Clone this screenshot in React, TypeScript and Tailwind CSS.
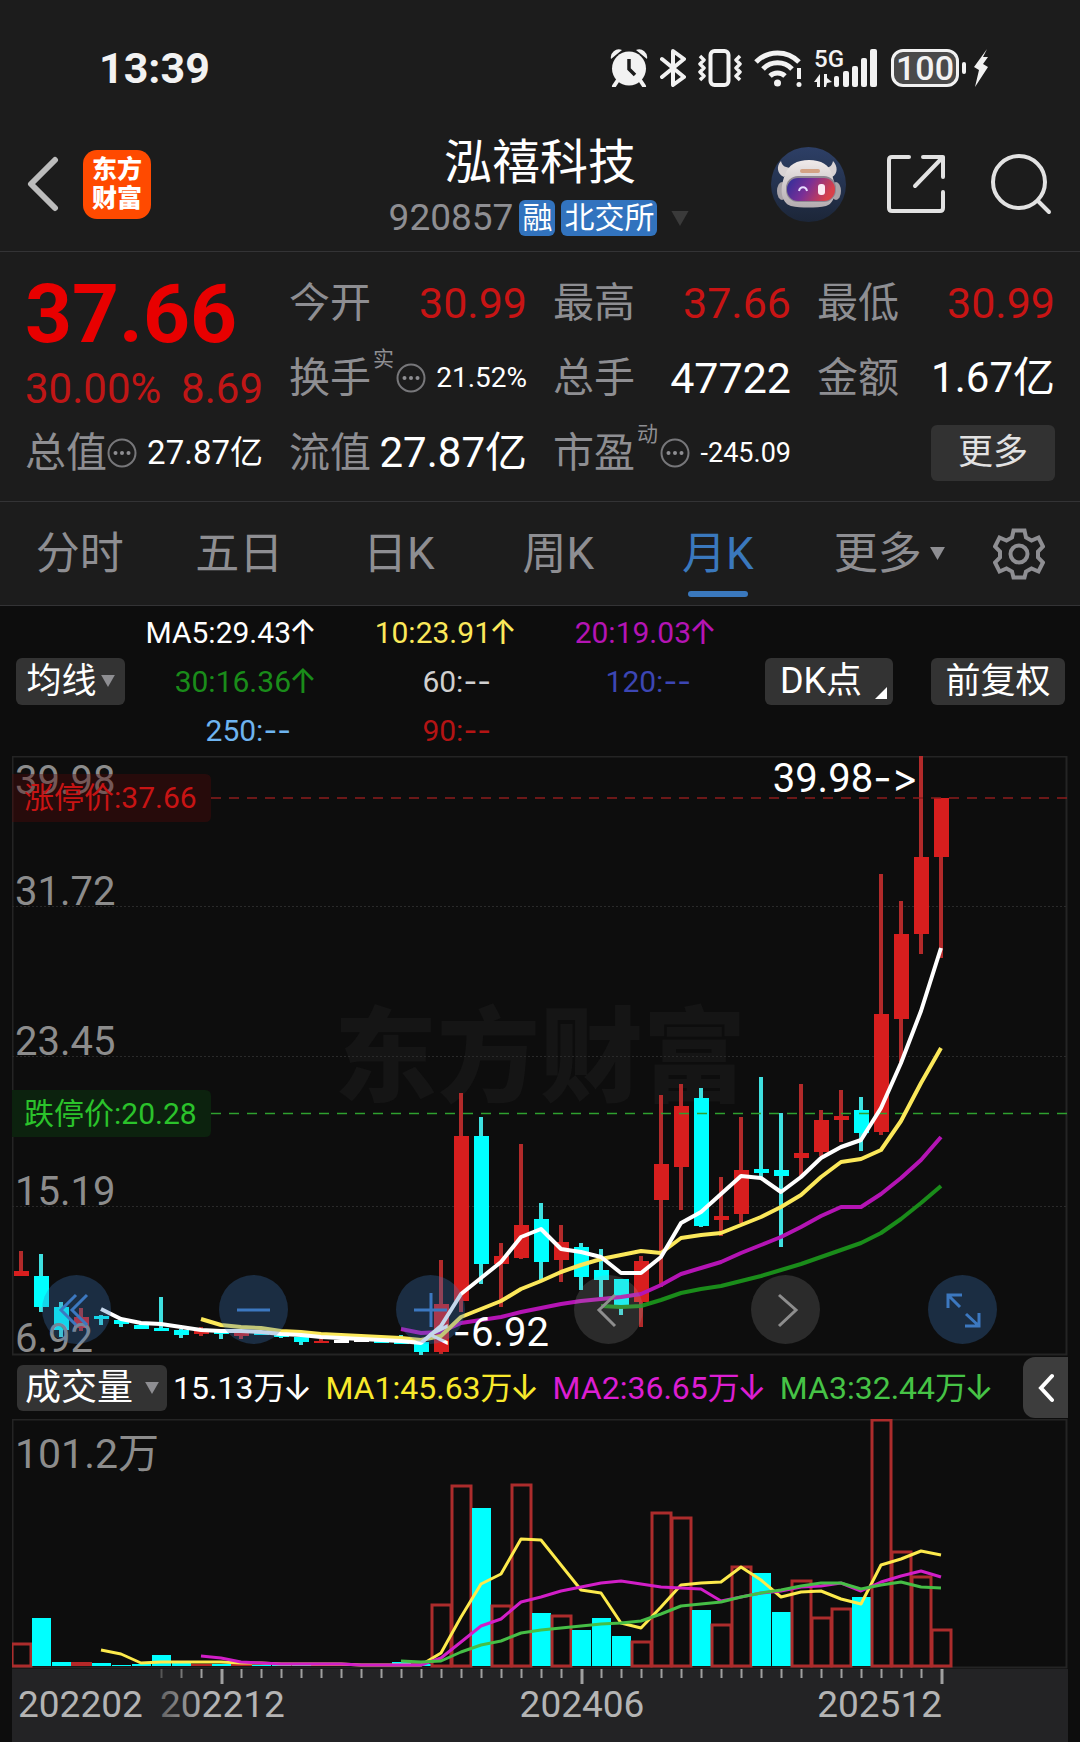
import React from "react";

const UP = "#d81e1e";
const DOWN = "#00ffff";

type Kind = "r" | "c" | "w";

/* kind, wick top, wick bottom, body top, body bottom */
const candles: [Kind, number, number, number, number][] = [
  ["r", 1251, 1276, 1271, 1276],
  ["c", 1254, 1312, 1276, 1307],
  ["c", 1302, 1337, 1307, 1330],
  ["r", 1308, 1331, 1317, 1328],
  ["c", 1315, 1325, 1316, 1319],
  ["c", 1319, 1327, 1320, 1324],
  ["c", 1324, 1329, 1325, 1329],
  ["c", 1297, 1331, 1328, 1331],
  ["c", 1329, 1338, 1330, 1335],
  ["r", 1327, 1336, 1331, 1334],
  ["c", 1332, 1339, 1332, 1334],
  ["r", 1333, 1339, 1333, 1336],
  ["c", 1332, 1335, 1332, 1335],
  ["c", 1334, 1338, 1334, 1337],
  ["c", 1337, 1345, 1337, 1342],
  ["r", 1339, 1343, 1341, 1343],
  ["w", 1340, 1343, 1340, 1343],
  ["w", 1340, 1342, 1340, 1342],
  ["c", 1341, 1343, 1341, 1343],
  ["c", 1335, 1344, 1341, 1344],
  ["c", 1342, 1355, 1342, 1352],
  ["r", 1260, 1354, 1304, 1352],
  ["r", 1093, 1312, 1136, 1301],
  ["c", 1117, 1284, 1136, 1264],
  ["r", 1243, 1307, 1256, 1264],
  ["r", 1144, 1259, 1225, 1258],
  ["c", 1203, 1280, 1219, 1262],
  ["r", 1225, 1282, 1242, 1260],
  ["c", 1243, 1290, 1247, 1277],
  ["c", 1249, 1297, 1270, 1280],
  ["c", 1279, 1315, 1279, 1305],
  ["r", 1256, 1327, 1261, 1302],
  ["r", 1095, 1287, 1164, 1200],
  ["r", 1084, 1210, 1106, 1167],
  ["c", 1088, 1227, 1098, 1226],
  ["r", 1177, 1236, 1216, 1220],
  ["r", 1117, 1223, 1170, 1214],
  ["c", 1077, 1179, 1169, 1173],
  ["c", 1113, 1247, 1170, 1176],
  ["r", 1084, 1177, 1153, 1158],
  ["r", 1110, 1156, 1120, 1152],
  ["r", 1090, 1142, 1116, 1120],
  ["c", 1097, 1151, 1110, 1133],
  ["r", 874, 1135, 1014, 1132],
  ["r", 901, 1064, 934, 1019],
  ["r", 756, 954, 857, 934],
  ["r", 798, 958, 798, 857],
];

const volumes: [Kind, number][] = [
  ["r", 1643], ["c", 1618], ["c", 1662], ["r", 1662], ["c", 1663], ["c", 1665], ["c", 1664],
  ["c", 1655], ["c", 1663], ["r", 1664], ["c", 1664], ["r", 1664], ["c", 1665], ["c", 1665],
  ["c", 1665], ["r", 1665], ["r", 1665], ["r", 1665], ["c", 1665], ["c", 1662], ["c", 1664],
  ["r", 1604], ["r", 1485], ["c", 1508], ["r", 1605], ["r", 1484], ["c", 1613], ["r", 1615],
  ["c", 1630], ["c", 1618], ["c", 1636], ["r", 1641], ["r", 1512], ["r", 1517], ["c", 1610],
  ["r", 1624], ["r", 1566], ["c", 1573], ["c", 1612], ["r", 1580], ["r", 1617], ["r", 1608],
  ["c", 1597], ["r", 1419], ["r", 1551], ["r", 1576], ["r", 1629],
];

const ma5 = [1309, 1319, 1323, 1324, 1327, 1330, 1331, 1331, 1332, 1334, 1335, 1337, 1338, 1339, 1340, 1341, 1343, 1326, 1294, 1278, 1262, 1237, 1229, 1249, 1252, 1257, 1273, 1273, 1257, 1223, 1212, 1194, 1176, 1178, 1192, 1177, 1158, 1147, 1140, 1108, 1063, 1011, 948];
const ma10 = [1319, 1325, 1327, 1328, 1331, 1332, 1334, 1335, 1336, 1337, 1338, 1340, 1336, 1317, 1309, 1301, 1289, 1281, 1272, 1265, 1259, 1255, 1251, 1253, 1238, 1235, 1233, 1225, 1217, 1207, 1195, 1177, 1162, 1159, 1150, 1121, 1083, 1048];
const ma20 = [1329, 1333, 1332, 1323, 1320, 1317, 1312, 1308, 1304, 1301, 1299, 1297, 1294, 1285, 1274, 1268, 1262, 1253, 1245, 1237, 1227, 1216, 1207, 1207, 1194, 1178, 1160, 1137];
const ma30 = [1306, 1307, 1306, 1300, 1293, 1289, 1286, 1281, 1276, 1270, 1264, 1257, 1250, 1243, 1233, 1219, 1203, 1186];

const vma1 = [1650, 1654, 1663, 1662, 1662, 1662, 1662, 1663, 1663, 1664, 1664, 1664, 1664, 1665, 1665, 1665, 1665, 1653, 1617, 1584, 1574, 1539, 1540, 1565, 1590, 1593, 1623, 1628, 1607, 1585, 1583, 1582, 1567, 1580, 1597, 1592, 1591, 1599, 1604, 1565, 1559, 1551, 1555];
const vma2 = [1656, 1658, 1662, 1663, 1664, 1664, 1664, 1664, 1665, 1665, 1665, 1665, 1658, 1642, 1626, 1619, 1602, 1597, 1591, 1587, 1583, 1581, 1584, 1587, 1588, 1589, 1601, 1597, 1593, 1591, 1587, 1586, 1583, 1591, 1582, 1576, 1571, 1577];
const vma3 = [1661, 1662, 1661, 1652, 1645, 1641, 1633, 1630, 1628, 1626, 1624, 1623, 1621, 1614, 1606, 1604, 1602, 1597, 1593, 1590, 1586, 1583, 1583, 1589, 1585, 1582, 1587, 1588];

const cx = (i: number) => 21 + 20 * i;
/* series end on the newest month, so the start index follows from the length */
const line = (ys: number[]) => ys.map((y, k) => `${cx(47 - ys.length + k)},${y}`).join(" ");

function Line({ ys, color, w }: { ys: number[]; color: string; w: number }) {
  return <polyline points={line(ys)} fill="none" stroke={color} strokeWidth={w} strokeLinejoin="round" />;
}

function Caret({ className }: { className: string }) {
  return (
    <svg viewBox="0 0 16 14" className={className} aria-hidden="true">
      <path d="M0 0h16L8 14z" fill="currentColor" />
    </svg>
  );
}

function StatusBar() {
  return (
    <div className="flex h-[136px] items-center justify-between pr-[91px] pl-[99px] text-[#f2f2f2]">
      <span className="text-[43px] leading-none font-bold">13:39</span>
      <div className="flex items-center gap-3">
        <svg viewBox="0 0 38 38" className="h-[38px] w-[38px]" fill="currentColor" aria-label="闹钟">
          <path d="M1 10a8 8 0 0 1 11-9zM37 10A8 8 0 0 0 26 1z" />
          <circle cx="19" cy="19.500" r="17" />
          <path d="M8 31l-4 6M30 31l4 6" stroke="currentColor" strokeWidth="4" strokeLinecap="round" />
          <path d="M19 10v10l6 6" fill="none" stroke="#1c1c1c" strokeWidth="3.500" />
        </svg>
        <svg viewBox="0 0 26 38" className="h-[38px] w-[26px]" fill="none" stroke="currentColor" strokeWidth="4" strokeLinejoin="round" strokeLinecap="round" aria-label="蓝牙">
          <path d="M2 10l22 18-11 8V2l11 8L2 28" />
        </svg>
        <svg viewBox="0 0 44 38" className="h-[38px] w-[44px]" fill="none" stroke="currentColor" aria-label="振动">
          <rect x="12.500" y="2" width="18" height="34" rx="4" strokeWidth="4" />
          <path d="M2 7l4 4-4 4 4 4-4 4 4 4-4 4M42 7l-4 4 4 4-4 4 4 4-4 4 4 4" strokeWidth="3.500" strokeLinejoin="round" />
        </svg>
        <svg viewBox="0 0 48 38" className="h-[38px] w-[48px]" fill="none" stroke="currentColor" strokeWidth="5" aria-label="无线网络">
          <path d="M2 13a30 30 0 0 1 43 0M9 20a20 20 0 0 1 29 0M16 27a11 11 0 0 1 15 0" />
          <circle cx="23.500" cy="34" r="3.500" fill="currentColor" stroke="none" />
          <path d="M45 19v11" strokeWidth="4" />
          <circle cx="45" cy="35.500" r="2.500" fill="currentColor" stroke="none" />
        </svg>
        <div className="relative mr-0.5 h-[38px] w-[63px]">
          <span className="absolute top-0 left-0 text-[24px] leading-[20px] font-medium">5G</span>
          <svg viewBox="0 0 63 38" className="h-[38px] w-[63px]" fill="currentColor" aria-label="信号">
            <path d="M0 33l6-8v13H3v-5zM10 25h3v4l5 4-5 1-1 4h-2z" />
            <rect x="20" y="27" width="5" height="11" rx="2" />
            <rect x="29" y="22" width="6" height="16" rx="2" />
            <rect x="38" y="17" width="6" height="21" rx="2" />
            <rect x="47" y="9" width="6" height="29" rx="2" />
            <rect x="56" y="0" width="7" height="38" rx="2" />
          </svg>
        </div>
        <div className="flex items-center gap-[3px]">
          <span className="flex h-[38px] w-[68px] items-center justify-center rounded-xl border-[3px] border-[#f2f2f2] bg-[#4a4a4a] text-[34px] leading-none font-medium">100</span>
          <span className="h-3 w-1 rounded bg-[#f2f2f2]" />
          <svg viewBox="0 0 16 38" className="ml-1 h-[38px] w-4" fill="currentColor" aria-label="充电">
            <path d="M14 0L1 18l5 3-4 17L15 18l-5-3 5-7h-5z" />
          </svg>
        </div>
      </div>
    </div>
  );
}

function Robot() {
  return (
    <svg viewBox="0 0 75 75" className="h-[75px] w-[75px]">
      <defs>
        <linearGradient id="visor" x1="0" x2="1" y1="0" y2="0.300">
          <stop offset="0" stopColor="#2c2f9a" />
          <stop offset="0.500" stopColor="#7a2f96" />
          <stop offset="1" stopColor="#d8404a" />
        </linearGradient>
        <linearGradient id="disc" x1="0" x2="0" y1="0" y2="1">
          <stop offset="0" stopColor="#2d3f66" />
          <stop offset="1" stopColor="#1c2638" />
        </linearGradient>
        <linearGradient id="shell" x1="0" x2="0" y1="0" y2="1">
          <stop offset="0" stopColor="#f0eaea" />
          <stop offset="1" stopColor="#b3acb0" />
        </linearGradient>
      </defs>
      <circle cx="37.500" cy="37.500" r="37.500" fill="url(#disc)" />
      <path d="M10 14c-5 5-4 13 3 16l8-9c-6 0-10-2-11-7zM62 14c5 5 5 13-1 16l-8-9c5 0 8-2 9-7z" fill="#d8d2d4" />
      <ellipse cx="11" cy="44" rx="5" ry="9" fill="#a9a3a8" />
      <ellipse cx="65" cy="44" rx="5" ry="9" fill="#a9a3a8" />
      <path d="M14 28c3-10 12-15 24-15s21 5 23 15c5 14 4 28-6 31-10 2-25 2-35 0-10-3-12-17-6-31z" fill="url(#shell)" />
      <rect x="29" y="22" width="20" height="4" rx="2" fill="#d3a284" />
      <rect x="15" y="29" width="50" height="26" rx="12" fill="#8d8692" />
      <rect x="16" y="31" width="48" height="23" rx="11" fill="url(#visor)" />
      <path d="M28 44c1-5 7-5 8 0" fill="none" stroke="#e8dcff" strokeWidth="2" />
      <rect x="47" y="37" width="7" height="11" rx="3" fill="#fbe9f3" />
    </svg>
  );
}

function Header() {
  return (
    <header className="grid h-[116px] grid-cols-[1fr_auto_1fr] items-center border-b border-[#333335] pb-[13px]">
      <div className="flex items-center pb-1.5 pl-[27px]">
        <button aria-label="返回">
          <svg viewBox="0 0 32 56" className="h-14 w-8" fill="none" stroke="#bcbcbc" strokeWidth="6" strokeLinecap="round" strokeLinejoin="round">
            <path d="M28 4L4 28l24 24" />
          </svg>
        </button>
        <div className="ml-6 flex h-[69px] w-[68px] flex-col items-center justify-center rounded-[14px] bg-[#ff4a00] text-[25px] leading-[29px] font-black text-white">
          <span>东方</span>
          <span>财富</span>
        </div>
      </div>
      <div className="flex flex-col items-center gap-3">
        <h1 className="text-[48px] leading-[50px] text-white">泓禧科技</h1>
        <div className="flex h-9 items-center text-[#8e8e92]">
          <span className="text-[37px] leading-9">920857</span>
          <span className="ml-1.5 flex h-9 w-9 items-center justify-center rounded-md bg-[#3273be] text-[30px] leading-9 text-white">融</span>
          <span className="ml-1.5 flex h-9 w-24 items-center justify-center rounded-md bg-[#3273be] text-[30px] leading-9 text-white">北交所</span>
          <Caret className="ml-3 h-[15px] w-[22px] text-[#3a3a3a]" />
        </div>
      </div>
      <div className="flex items-center justify-end pr-7 pb-1.5">
        <button aria-label="智能助手"><Robot /></button>
        <button aria-label="分享" className="ml-10">
          <svg viewBox="0 0 60 60" className="h-[60px] w-[60px]" fill="none" stroke="#e2e2e2" strokeWidth="4" strokeLinecap="round" strokeLinejoin="round">
            <path d="M23 3H6q-3 0-3 3v48q0 3 3 3h48q3 0 3-3V38M37 3h20v20M57 3L29 32" />
          </svg>
        </button>
        <button aria-label="搜索" className="ml-11">
          <svg viewBox="0 0 62 62" className="h-[62px] w-[62px]" fill="none" stroke="#e2e2e2" strokeWidth="4" strokeLinecap="round">
            <circle cx="29" cy="29" r="26" />
            <path d="M48 48l11 11" />
          </svg>
        </button>
      </div>
    </header>
  );
}

function Dots() {
  return (
    <svg viewBox="0 0 30 30" className="h-[30px] w-[30px]" aria-hidden="true">
      <circle cx="15" cy="15" r="13.500" fill="none" stroke="#77777a" strokeWidth="2" />
      <circle cx="8.500" cy="15" r="2" fill="#8e8e92" />
      <circle cx="15" cy="15" r="2" fill="#8e8e92" />
      <circle cx="21.500" cy="15" r="2" fill="#8e8e92" />
    </svg>
  );
}

function Cell({ label, mark, dots, value, size, red }: { label: string; mark?: string; dots?: boolean; value: string; size: string; red?: boolean }) {
  return (
    <div className="flex h-[75px] items-center justify-between whitespace-nowrap">
      <dt className="flex items-center text-[41px] leading-[50px] text-[#8e8e92]">
        {label}
        {mark && <span className="mb-[38px] ml-0.5 w-[23px] text-[21px] leading-6">{mark}</span>}
        {dots && <Dots />}
      </dt>
      <dd className={`${size} leading-[50px] ${red ? "text-[#c81414]" : "text-white"}`}>{value}</dd>
    </div>
  );
}

function Quote() {
  return (
    <dl className="grid grid-cols-4 gap-x-[26px] border-b border-[#333335] px-[25px] pt-[13px] pb-[11px]">
      <div className="row-span-2 whitespace-nowrap">
        <dt className="text-[82px] leading-[98px] font-bold text-[#e80000]">37.66</dt>
        <dd className="flex justify-between text-[42px] leading-[52px] text-[#c01616]">
          <span>30.00%</span>
          <span>8.69</span>
        </dd>
      </div>
      <Cell label="今开" value="30.99" size="text-[43px]" red />
      <Cell label="最高" value="37.66" size="text-[43px]" red />
      <Cell label="最低" value="30.99" size="text-[43px]" red />
      <Cell label="换手" mark="实" dots value="21.52%" size="text-[28px]" />
      <Cell label="总手" value="47722" size="text-[43px]" />
      <Cell label="金额" value="1.67亿" size="text-[42px]" />
      <Cell label="总值" dots value="27.87亿" size="text-[33px]" />
      <Cell label="流值" value="27.87亿" size="text-[42px]" />
      <Cell label="市盈" mark="动" dots value="-245.09" size="text-[27px]" />
      <div className="flex h-[75px] items-center justify-end">
        <button className="h-14 w-[124px] rounded-md bg-[#323232] text-[35px] leading-[50px] text-[#e2e2e2]">更多</button>
      </div>
    </dl>
  );
}

function Tabs() {
  const tabs = ["分时", "五日", "日K", "周K", "月K"];
  return (
    <nav className="flex h-[104px] border-b border-[#333335] text-[44px] leading-[60px] text-[#8e8e92]">
      <div className="grid flex-1 grid-cols-6">
        {tabs.map((t) => (
          <button key={t} className={t === "月K" ? "relative text-[#3a78bd]" : ""}>
            {t}
            {t === "月K" && <span className="absolute bottom-2 left-1/2 h-1.5 w-[60px] -translate-x-1/2 rounded-full bg-[#3a78bd]" />}
          </button>
        ))}
        <button className="flex items-center justify-center gap-2 pl-6">
          更多
          <Caret className="h-[13px] w-[15px]" />
        </button>
      </div>
      <button aria-label="设置" className="flex w-[123px] items-center justify-center">
        <svg viewBox="0 0 52 52" className="h-[52px] w-[52px]" fill="none" stroke="currentColor" strokeWidth="4">
          <path d="M20.500 2.500h11l1.500 7 5.500 3 7-3 4.500 9-5 5v6l5 5-4.500 9-7-3-5.500 3-1.500 6h-11l-1.500-6-5.500-3-7 3-4.500-9 5-5v-6l-5-5 4.500-9 7 3 5.500-3z" />
          <circle cx="26" cy="26" r="8.500" />
        </svg>
      </button>
    </nav>
  );
}

function Averages() {
  const items: [string, string, string][] = [
    ["MA5:", "29.43", "text-white"],
    ["10:", "23.91", "text-[#fbe85a]"],
    ["20:", "19.03", "text-[#b414b4]"],
    ["30:", "16.36", "text-[#1a8c1a]"],
    ["60:", "--", "text-[#d0d0d0]"],
    ["120:", "--", "text-[#3c46b4]"],
    ["250:", "--", "text-[#6eb4f0]"],
    ["90:", "--", "text-[#b41414]"],
  ];
  return (
    <section className="flex h-[150px] items-center pr-[15px] pl-4">
      <button className="flex h-[47px] w-[109px] items-center justify-center gap-1 rounded-md bg-[#333333] text-[35px] leading-[47px] text-white">
        均线
        <Caret className="h-3 w-3.5 text-[#8e8e92]" />
      </button>
      <ul className="grid flex-1 grid-cols-[24fr_25fr_25fr] text-[30px] leading-[49px]">
        {items.map(([name, value, color]) => (
          <li key={name} className={`flex justify-end ${color}`}>
            <span>{name}</span>
            <span className={value === "--" ? "font-[Inter] [font-variant-ligatures:none]" : ""}>{value}</span>
            <span className="flex w-[26px] justify-end text-[34px]">{value === "--" ? "" : "↑"}</span>
          </li>
        ))}
      </ul>
      <button className="relative ml-12 h-[47px] w-[128px] rounded-md bg-[#333333] pr-4 text-[36px] leading-[47px] text-white">
        DK点
        <svg viewBox="0 0 12 12" className="absolute right-1.5 bottom-1.5 h-3 w-3" aria-hidden="true">
          <path d="M12 0v12H0z" fill="white" />
        </svg>
      </button>
      <button className="ml-[38px] h-[47px] w-[134px] rounded-md bg-[#333333] text-[35px] leading-[47px] text-white">前复权</button>
    </section>
  );
}

const controls: [string, boolean, string][] = [
  ["最早", true, "M34 20L19 35l15 15M45 20L30 35l15 15"],
  ["缩小", true, "M18 35h33"],
  ["放大", true, "M18 35h33M35 18v34"],
  ["前一月", false, "M41 20L25 35l16 16"],
  ["后一月", false, "M28 20l17 15-17 16"],
  ["全屏", true, "M20 33V20h14M20 20l12 12M51 38v13H37M51 51L38 39"],
];

function PriceChart() {
  const grays: [string, number][] = [["39.98", 794], ["31.72", 905], ["23.45", 1055], ["15.19", 1205], ["6.92", 1352]];
  return (
    <section className="relative mx-3">
      <svg viewBox="12 756 1056 600" className="block h-auto w-full" role="img" aria-label="月K线">
        <rect x="12.500" y="756.500" width="1054" height="598" fill="none" stroke="#242424" strokeWidth="2" />
        <text x="540" y="1094" textAnchor="middle" fontSize="103" fontWeight="900" fill="#151515">东方财富</text>
        {[906, 1056, 1206].map((y) => (
          <path key={y} d={`M12 ${y}.5H1067`} stroke="#2a2a2a" strokeWidth="1" strokeDasharray="2 2" />
        ))}
        {candles.map(([k, wt, wb, bt, bb], i) => (
          <g key={i}>
            <rect x={cx(i) - 2} y={wt} width="4" height={wb - wt} fill={k === "r" ? "#b22a2a" : k === "w" ? "#fff" : "#3fe0e0"} />
            <rect x={cx(i) - 7} y={bt} width="15" height={bb - bt} fill={k === "r" ? UP : k === "w" ? "#fff" : DOWN} />
          </g>
        ))}
        <path d="M211 798H1067" stroke="#8c1c1c" strokeWidth="1.500" strokeDasharray="10 8" />
        <path d="M211 1113.500H1067" stroke="#2fa02f" strokeWidth="1.500" strokeDasharray="10 8" />
        <Line ys={ma30} color="#1a8c1a" w={4} />
        <Line ys={ma20} color="#b414b4" w={4} />
        <Line ys={ma10} color="#fbe85a" w={4} />
        <Line ys={ma5} color="#ffffff" w={4} />
        <g fontSize="40" fill="#8c8c8c">
          {grays.map(([t, y]) => (
            <text key={t} x="15" y={y}>{t}</text>
          ))}
        </g>
        <path d="M12 774h193q6 0 6 6v36q0 6-6 6H12z" fill="#500a0a" fillOpacity="0.400" />
        <path d="M12 1090h193q6 0 6 6v35q0 6-6 6H12z" fill="#0c220e" />
        <text x="24" y="808" fontSize="30" fill="#c81414">涨停价:37.66</text>
        <text x="24" y="1124" fontSize="30" fill="#2bc32b">跌停价:20.28</text>
        <text x="918" y="792" fontSize="40" textAnchor="end" fill="#fff">39.98<tspan className="font-[Inter] [font-variant-ligatures:none]" fontSize="40">-&gt;</tspan></text>
        <text x="426" y="1346" fontSize="40" fill="#fff"><tspan className="font-[Inter] [font-variant-ligatures:none]" fontSize="40">&lt;-</tspan>6.92</text>
      </svg>
      <div className="absolute right-[71px] bottom-3 left-[30px] flex justify-between">
        {controls.map(([name, active, d]) => (
          <button key={name} aria-label={name} className={active ? "rounded-full bg-[#3a78bd]/30" : "rounded-full bg-[#a3a3a3]/20"}>
            <svg viewBox="0 0 69 69" className="h-[69px] w-[69px]" fill="none" stroke={active ? "#3c78c0" : "#8e8e8e"} strokeWidth="3">
              <path d={d} />
            </svg>
          </button>
        ))}
      </div>
    </section>
  );
}

function VolumeBar() {
  const items: [string, string][] = [
    ["15.13万", "text-white"],
    ["MA1:45.63万", "text-[#f8e92c]"],
    ["MA2:36.65万", "text-[#dc1ed2]"],
    ["MA3:32.44万", "text-[#46c346]"],
  ];
  return (
    <section className="flex h-[63px] items-center justify-between pr-3 pl-[17px]">
      <button className="flex h-[46px] w-[150px] items-center justify-center gap-3 rounded-md bg-[#333333] text-[36px] leading-[46px] text-white">
        成交量
        <Caret className="h-3 w-3.5 text-[#8e8e92]" />
      </button>
      <ul className="ml-1.5 flex flex-1 gap-4 text-[32px] leading-[60px] whitespace-nowrap">
        {items.map(([text, color]) => (
          <li key={text} className={`flex ${color}`}>
            {text}
            <span className="flex w-6 justify-center text-[36px]">↓</span>
          </li>
        ))}
      </ul>
      <button aria-label="展开" className="flex h-[61px] w-[45px] items-center justify-center rounded-l-xl bg-[#3d3d3d]">
        <svg viewBox="0 0 16 30" className="h-[30px] w-4" fill="none" stroke="white" strokeWidth="4" strokeLinecap="round">
          <path d="M14 3L3 15l11 12" />
        </svg>
      </button>
    </section>
  );
}

function VolumeChart() {
  return (
    <section className="mx-3">
      <svg viewBox="12 1419 1056 250" className="block h-auto w-full" role="img" aria-label="成交量">
        <rect x="12.500" y="1419.500" width="1054" height="248" fill="none" stroke="#242424" strokeWidth="2" />
        <text x="15" y="1468" fontSize="41" fill="#8c8c8c">101.2万</text>
        {volumes.map(([k, y], i) =>
          k === "c" ? (
            <rect key={i} x={cx(i) - 9} y={y} width="19" height={1666 - y} fill={DOWN} />
          ) : y > 1660 ? (
            <rect key={i} x={cx(i) - 10} y={y} width="21" height={1666 - y} fill="#b42828" />
          ) : (
            <rect key={i} x={cx(i) - 9} y={y + 1} width="19" height={1665 - y} fill="none" stroke="#ac2c2c" strokeWidth="3" />
          ),
        )}
        <Line ys={vma1} color="#fdea4c" w={3} />
        <Line ys={vma2} color="#d21ec8" w={3} />
        <Line ys={vma3} color="#46be46" w={3} />
      </svg>
      <svg viewBox="12 1669 1056 73" className="block h-auto w-full bg-[#232325]" role="img" aria-label="时间轴">
        <defs>
          <linearGradient id="fade" gradientUnits="userSpaceOnUse" x1="150" x2="205" y1="0" y2="0">
            <stop offset="0" stopColor="#505052" />
            <stop offset="1" stopColor="#b4b4b4" />
          </linearGradient>
        </defs>
        {candles.map((_, i) =>
          i < 7 ? null : (
            <rect
              key={i}
              x={cx(i) - 0.5}
              y="1669"
              width={i === 10 || i === 28 || i === 46 ? 3 : 2}
              height={i === 10 || i === 28 || i === 46 ? 15 : 9}
              fill={i === 7 ? "#555" : i === 8 ? "#777" : "#a0a0a0"}
            />
          ),
        )}
        <g fontSize="37" fill="#b4b4b4">
          <text x="18" y="1717">202202</text>
          <text x="160" y="1717" fill="url(#fade)">202212</text>
          <text x="582" y="1717" textAnchor="middle">202406</text>
          <text x="942" y="1717" textAnchor="end">202512</text>
        </g>
      </svg>
    </section>
  );
}

export default function App() {
  return (
    <main className="min-h-screen bg-[#0d0d0d] font-[Roboto,Inter,'Noto_Sans_CJK_SC',sans-serif]">
      <div className="bg-[#1c1c1c]">
        <StatusBar />
        <Header />
        <Quote />
        <Tabs />
      </div>
      <Averages />
      <PriceChart />
      <VolumeBar />
      <VolumeChart />
    </main>
  );
}
